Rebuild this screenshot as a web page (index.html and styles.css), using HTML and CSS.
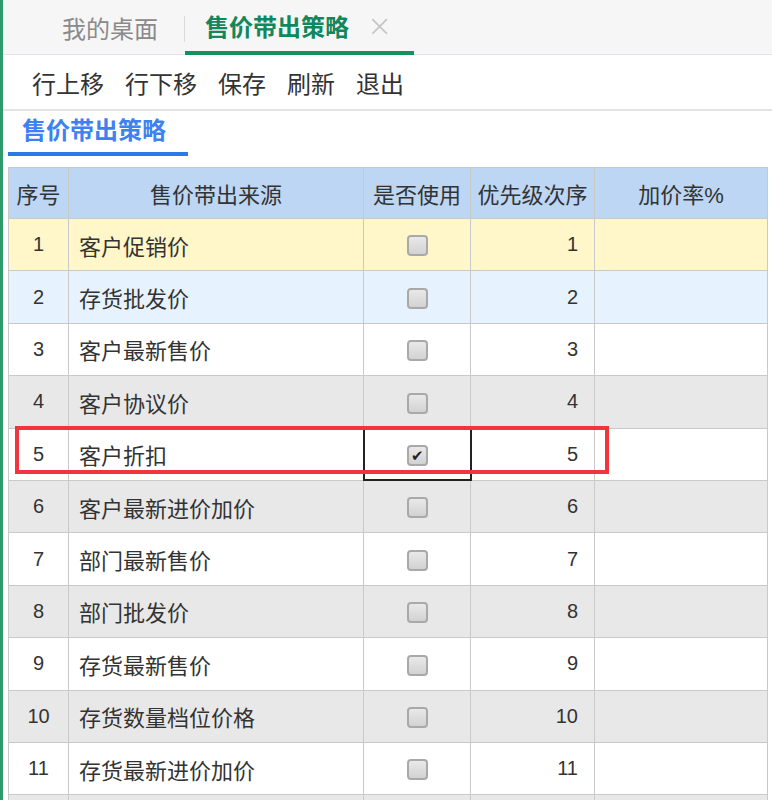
FILE: index.html
```html
<!DOCTYPE html>
<html lang="zh-CN">
<head>
    <meta charset="UTF-8">
    <title>售价带出策略</title>
    <link rel="stylesheet" href="styles.css">
</head>
<body>
<div class="page">
    <!-- 顶部标签页 -->
    <div class="tab-bar">
        <div class="tab">我的桌面</div>
        <div class="tab active">售价带出策略<span class="tab-close">×</span></div>
    </div>

    <!-- 工具栏 -->
    <div class="toolbar">
        <span class="tool">行上移</span>
        <span class="tool">行下移</span>
        <span class="tool">保存</span>
        <span class="tool">刷新</span>
        <span class="tool">退出</span>
    </div>

    <div class="sub-tab">售价带出策略</div>

    <table class="grid">
        <thead>
            <tr>
                <th class="c-no">序号</th>
                <th class="c-src">售价带出来源</th>
                <th class="c-use">是否使用</th>
                <th class="c-pri">优先级次序</th>
                <th class="c-rate">加价率%</th>
            </tr>
        </thead>
        <tbody>
            <tr class="row-yellow"><td class="c-no">1</td><td class="c-src">客户促销价</td><td class="c-use"><span class="chk"></span></td><td class="c-pri">1</td><td></td></tr>
            <tr class="row-blue"><td class="c-no">2</td><td class="c-src">存货批发价</td><td class="c-use"><span class="chk"></span></td><td class="c-pri">2</td><td></td></tr>
            <tr><td class="c-no">3</td><td class="c-src">客户最新售价</td><td class="c-use"><span class="chk"></span></td><td class="c-pri">3</td><td></td></tr>
            <tr class="row-gray"><td class="c-no">4</td><td class="c-src">客户协议价</td><td class="c-use"><span class="chk"></span></td><td class="c-pri">4</td><td></td></tr>
            <tr><td class="c-no">5</td><td class="c-src">客户折扣</td><td class="c-use cell-focus"><span class="chk checked">✔</span></td><td class="c-pri">5</td><td></td></tr>
            <tr class="row-gray"><td class="c-no">6</td><td class="c-src">客户最新进价加价</td><td class="c-use"><span class="chk"></span></td><td class="c-pri">6</td><td></td></tr>
            <tr><td class="c-no">7</td><td class="c-src">部门最新售价</td><td class="c-use"><span class="chk"></span></td><td class="c-pri">7</td><td></td></tr>
            <tr class="row-gray"><td class="c-no">8</td><td class="c-src">部门批发价</td><td class="c-use"><span class="chk"></span></td><td class="c-pri">8</td><td></td></tr>
            <tr><td class="c-no">9</td><td class="c-src">存货最新售价</td><td class="c-use"><span class="chk"></span></td><td class="c-pri">9</td><td></td></tr>
            <tr class="row-gray"><td class="c-no">10</td><td class="c-src">存货数量档位价格</td><td class="c-use"><span class="chk"></span></td><td class="c-pri">10</td><td></td></tr>
            <tr><td class="c-no">11</td><td class="c-src">存货最新进价加价</td><td class="c-use"><span class="chk"></span></td><td class="c-pri">11</td><td></td></tr>
            <tr class="row-gray"><td></td><td></td><td></td><td></td><td></td></tr>
        </tbody>
    </table>

    <!-- 红色标注框 -->
    <div class="mark-box"></div>
</div>
</body>
</html>
```

FILE: styles.css
```css
body {
    margin: 0;
    font-family: "Liberation Sans", "Noto Sans CJK SC", sans-serif;
    color: #333;
    background: #fff;
    overflow: hidden;
}
.page {
    position: relative;
    border-left: 3px solid #2f9b6c;
    height: 800px;
    overflow: hidden;
}

/* 标签页 */
.tab-bar {
    display: flex;
    align-items: stretch;
    height: 54px;
    background: #f6f6f6;
    border-bottom: 1px solid #e1e5ea;
    padding-left: 34px;
}
.tab {
    display: flex;
    align-items: center;
    padding: 0 27px 0 25px;
    font-size: 24px;
    color: #8a8a8a;
    position: relative;
}
.tab:first-child::after {
    content: "";
    position: absolute;
    right: 0;
    top: 16px;
    height: 26px;
    border-right: 1px solid #dadada;
}
.tab.active {
    padding: 0 22px 0 20px;
    color: #10875c;
    font-weight: bold;
    border-bottom: 4px solid #12925f;
    margin-bottom: -1px;
}
.tab-close {
    margin-left: 18px;
    font-weight: normal;
    color: #c2c2c2;
    font-size: 30px;
    font-family: "DejaVu Sans", sans-serif;
    font-weight: 200;
}

/* 工具栏 */
.toolbar {
    display: flex;
    gap: 21px;
    align-items: center;
    height: 54px;
    padding-left: 29px;
    border-bottom: 2px solid #e4e4e4;
}
.tool {
    font-size: 24px;
    color: #333;
}

.sub-tab {
    margin-left: 5px;
    width: 166px;
    padding-left: 14px;
    height: 41px;
    line-height: 40px;
    font-size: 24px;
    font-weight: bold;
    color: #3d82f0;
    border-bottom: 4px solid #2a7be4;
    margin-bottom: 11px;
    white-space: nowrap;
}

/* 表格 */
.grid {
    margin-left: 5px;
    width: 760px;
    border-collapse: collapse;
    table-layout: fixed;
}
.grid th, .grid td {
    border: 1px solid #c9c9c9;
    height: 52.4px;
    padding: 0;
    font-size: 22px;
    font-weight: normal;
    color: #333;
    box-sizing: border-box;
}
.grid th {
    background: #bcd6f3;
    height: 51px;
}
.grid .c-no { width: 60px; text-align: center; font-size: 20px; font-family: "Liberation Sans Narrow", "Liberation Sans", "Noto Sans CJK SC", sans-serif; }
.grid th.c-no { font-size: 22px; font-family: "Noto Sans CJK SC", sans-serif; }
.grid .c-src { width: 295px; }
.grid td.c-src { padding-left: 10px; }
.grid .c-use { width: 107px; text-align: center; }
.grid .c-pri { width: 124px; }
.grid td.c-pri {
    text-align: right;
    padding-right: 16px;
    font-size: 20px;
    font-family: "Liberation Sans Narrow", "Liberation Sans", sans-serif;
}

.row-yellow td { background: #fff6c9; }
.row-blue td { background: #e7f2ff; }
.row-gray td { background: #e8e8e8; }

.chk {
    display: inline-block;
    width: 17px;
    height: 17px;
    border: 2px solid #a9a9a9;
    border-radius: 4px;
    background: linear-gradient(#e9e9e9, #d2d2d2);
    vertical-align: middle;
    font-size: 15px;
    line-height: 17px;
    color: #222;
    text-align: center;
}
.grid td.cell-focus {
    outline: 2px solid #222;
    outline-offset: -1px;
}

.mark-box {
    position: absolute;
    left: 12px;
    top: 426px;
    width: 586px;
    height: 40px;
    border: 4px solid #f2343c;
    pointer-events: none;
}
```
